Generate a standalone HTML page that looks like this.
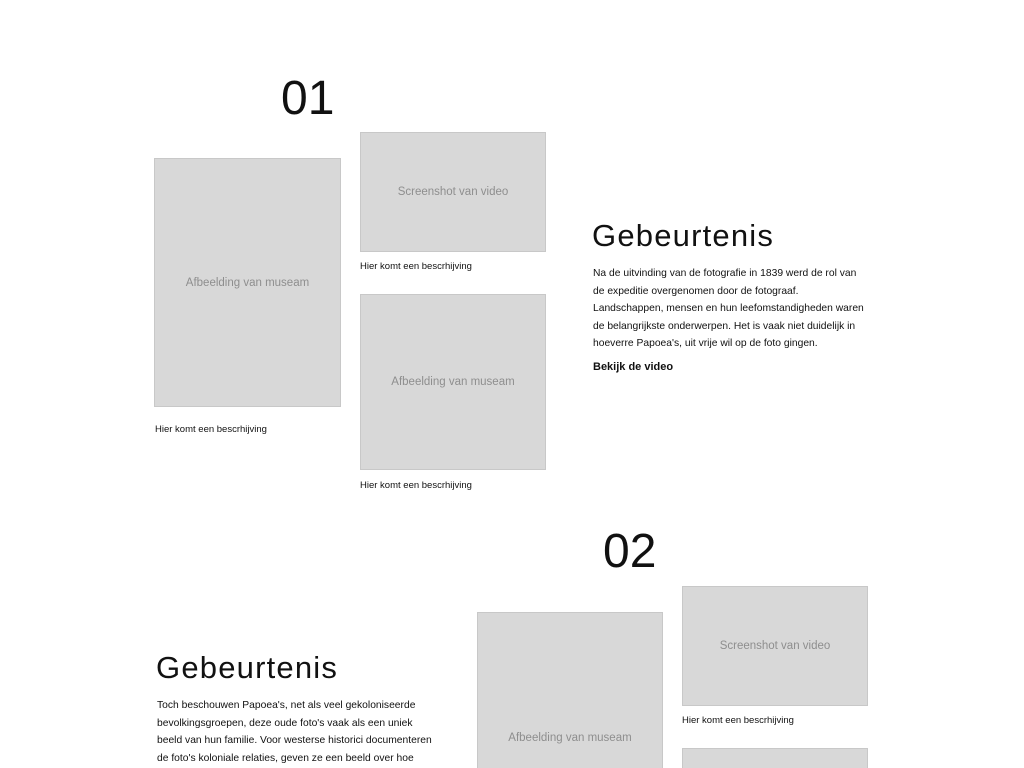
<!DOCTYPE html>
<html style="overflow:hidden;height:768px"><head><meta charset="utf-8"><style>
body{margin:0;width:1024px;height:768px;overflow:hidden;background:#fff;font-family:"Liberation Sans",sans-serif;color:#111;position:relative}
.a{position:absolute}
.box{position:absolute;background:#d8d8d8;border:1px solid #c8c8c8;box-sizing:border-box;display:flex;align-items:center;justify-content:center;color:#8e8e8e;font-size:11.5px}
.cap{position:absolute;font-size:9.5px;color:#111;white-space:nowrap}
.num{position:absolute;font-size:48px;line-height:48px}
.h{position:absolute;font-size:31px;line-height:34px;letter-spacing:1.2px}
.p{position:absolute;font-size:10.3px;line-height:17.6px;white-space:nowrap}
</style></head><body>
<div class="num" style="left:281px;top:75px">01</div>
<div class="box" style="left:154px;top:158px;width:187px;height:249px">Afbeelding van museam</div>
<div class="cap" style="left:155px;top:424px">Hier komt een bescrhijving</div>
<div class="box" style="left:360px;top:132px;width:186px;height:120px">Screenshot van video</div>
<div class="cap" style="left:360px;top:261px">Hier komt een bescrhijving</div>
<div class="box" style="left:360px;top:294px;width:186px;height:176px">Afbeelding van museam</div>
<div class="cap" style="left:360px;top:480px">Hier komt een bescrhijving</div>
<div class="h" style="left:592px;top:219px">Gebeurtenis</div>
<div class="p" style="left:593px;top:265px">Na de uitvinding van de fotografie in 1839 werd de rol van<br>de expeditie overgenomen door de fotograaf.<br>Landschappen, mensen en hun leefomstandigheden waren<br>de belangrijkste onderwerpen. Het is vaak niet duidelijk in<br>hoeverre Papoea's, uit vrije wil op de foto gingen.</div>
<div class="a" style="left:593px;top:361px;font-size:11px;font-weight:bold">Bekijk de video</div>

<div class="num" style="left:603px;top:528px">02</div>
<div class="box" style="left:477px;top:612px;width:186px;height:156px;padding-bottom:94px;border-bottom:none"><span style="position:absolute;top:119px">Afbeelding van museam</span></div>
<div class="box" style="left:682px;top:586px;width:186px;height:120px">Screenshot van video</div>
<div class="cap" style="left:682px;top:715px">Hier komt een bescrhijving</div>
<div class="box" style="left:682px;top:748px;width:186px;height:20px;border-bottom:none"></div>
<div class="h" style="left:156px;top:651px">Gebeurtenis</div>
<div class="p" style="left:157px;top:697px">Toch beschouwen Papoea's, net als veel gekoloniseerde<br>bevolkingsgroepen, deze oude foto's vaak als een uniek<br>beeld van hun familie. Voor westerse historici documenteren<br>de foto's koloniale relaties, geven ze een beeld over hoe</div>
</body></html>
